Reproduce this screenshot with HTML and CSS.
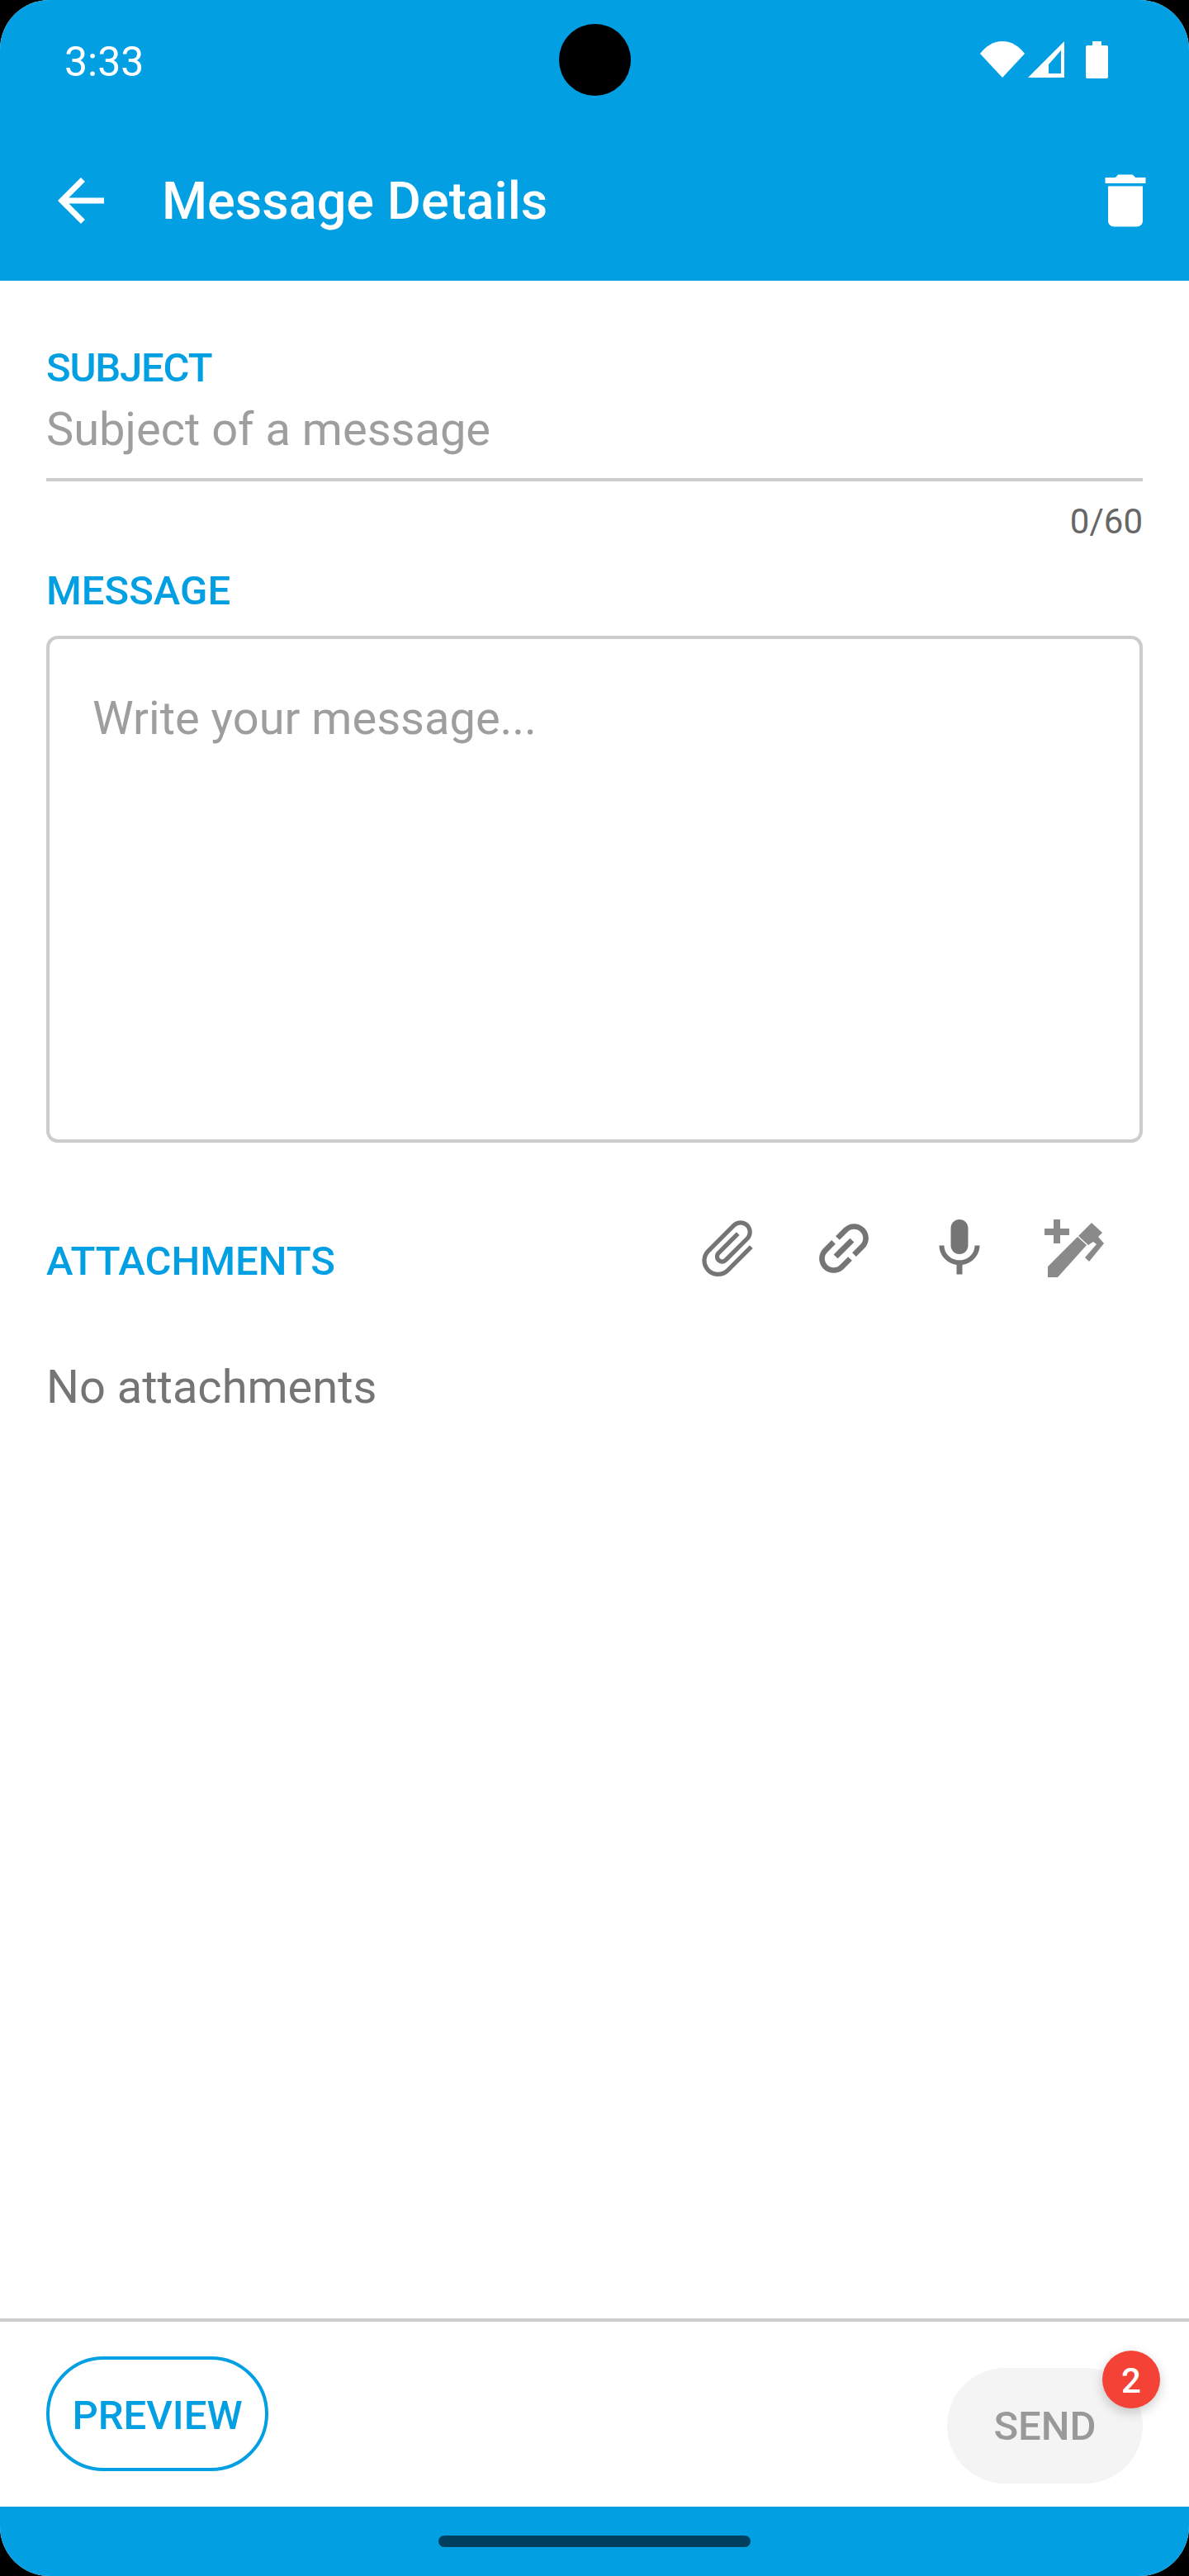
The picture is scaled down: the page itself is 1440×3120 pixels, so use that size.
FILE: index.html
```html
<!DOCTYPE html>
<html lang="en">
<head>
    <meta charset="UTF-8">
    <meta name="viewport" content="width=device-width, initial-scale=1.0">
    <title>Message Details</title>
    <link rel="stylesheet" href="styles.css">
</head>
<body>

    <div class="screen">
        <div class="camera"></div>

        <div class="status-bar">
            <span class="clock">3:33</span>
            <div class="status-icons">
                <svg class="status-wifi" viewBox="0 0 54 44"><path fill="#fff" d="M0 15C7 6 16 0 27 0s20 6 27 15L27 44z"/></svg>
                <svg class="status-signal" viewBox="0 0 44 44"><path fill="#fff" fill-rule="evenodd" d="M44 0v44H0zM40 11L25 28v11h15z"/></svg>
                <svg class="status-battery" viewBox="0 0 27 45"><path fill="#fff" d="M8 0h11v5h6q2 0 2 2v36q0 2-2 2H2q-2 0-2-2V7q0-2 2-2h6z"/></svg>
            </div>
        </div>

        <header class="toolbar">
            <svg class="icon" viewBox="0 0 24 24"><path fill="#fff" d="M20 11H7.83l5.59-5.59L12 4l-8 8 8 8 1.41-1.41L7.83 13H20v-2z"/></svg>
            <h1 class="toolbar-title">Message Details</h1>
            <svg class="icon" viewBox="0 0 24 24"><path fill="#fff" d="M6 19c0 1.1.9 2 2 2h8c1.1 0 2-.9 2-2V7H6v12zM19 4h-3.5l-1-1h-5l-1 1H5v2h14V4z"/></svg>
        </header>

        <main class="content">
            <div class="field-label subject-label">SUBJECT</div>
            <div class="subject-input">Subject of a message</div>
            <div class="counter">0/60</div>

            <div class="field-label message-label">MESSAGE</div>
            <div class="message-box">Write your message...</div>

            <div class="attachments-row">
                <div class="field-label attachments-label">ATTACHMENTS</div>
                <div class="attach-actions">
                    <svg class="icon" viewBox="0 0 24 24"><path class="grey" transform="rotate(45 12 12)" d="M16.5 6v11.5c0 2.21-1.79 4-4 4s-4-1.79-4-4V5c0-1.38 1.12-2.5 2.500-2.500s2.500 1.120 2.500 2.500v10.500c0 .55-.45 1-1 1s-1-.45-1-1V6H10v9.500c0 1.380 1.120 2.500 2.500 2.500s2.500-1.120 2.500-2.500V5c0-2.210-1.790-4-4-4S7 2.790 7 5v12.500c0 3.040 2.460 5.500 5.500 5.500s5.500-2.460 5.500-5.500V6h-1.500z"/></svg>
                    <svg class="icon" viewBox="0 0 24 24"><path class="grey" transform="rotate(-45 12 12)" d="M3.9 12c0-1.71 1.39-3.1 3.1-3.1h4V7H7c-2.76 0-5 2.24-5 5s2.24 5 5 5h4v-1.9H7c-1.71 0-3.1-1.39-3.1-3.1zM8 13h8v-2H8v2zm9-6h-4v1.9h4c1.71 0 3.1 1.39 3.1 3.1s-1.39 3.1-3.1 3.1h-4V17h4c2.76 0 5-2.24 5-5s-2.24-5-5-5z"/></svg>
                    <svg class="icon" viewBox="0 0 24 24"><path class="grey" d="M12 14c1.66 0 2.99-1.34 2.99-3L15 5c0-1.66-1.34-3-3-3S9 3.34 9 5v6c0 1.66 1.34 3 3 3zm5.3-3c0 3-2.54 5.1-5.3 5.1S6.7 14 6.7 11H5c0 3.41 2.72 6.23 6 6.72V21h2v-3.28c3.28-.48 6-3.3 6-6.72h-1.7z"/></svg>
                    <svg class="icon" viewBox="0 0 84 84"><path class="grey-light" d="M5 18h11V7h8v11h11v8H24v10h-8V26H5zM9 77V64l36-36 11 10-35 39zM46 27l16-16 13 12-5 5 7 8-18 22-5-5 14-16-4-3-6 4z"/></svg>
                </div>
            </div>

            <p class="no-attachments">No attachments</p>
        </main>

        <footer class="actions">
            <button class="btn-preview">PREVIEW</button>
            <div class="send-wrap">
                <button class="btn-send">SEND</button>
                <span class="badge">2</span>
            </div>
        </footer>

        <div class="nav-bar"><div class="nav-handle"></div></div>
    </div>

</body>
</html>
```

FILE: styles.css
```css
* {
    box-sizing: border-box;
}
body {
    margin: 0;
    background-color: #000;
    font-family: Roboto, 'Liberation Sans', sans-serif;
}
.screen {
    width: 1440px;
    height: 3120px;
    position: relative;
    display: flex;
    flex-direction: column;
    background-color: #fff;
    border-radius: 60px;
    overflow: hidden;
}
.camera {
    position: absolute;
    top: 29px;
    left: 677px;
    width: 87px;
    height: 87px;
    background-color: #000;
    border-radius: 50%;
}

/* --- status bar and toolbar --- */
.status-bar {
    height: 98px;
    flex-shrink: 0;
    display: flex;
    justify-content: space-between;
    padding: 0 98px 0 78px;
    background-color: #039fe3;
    align-items: flex-start;
}
.clock {
    margin-top: 47px;
    font-size: 50px;
    line-height: 56px;
    color: #fff;
}
.status-icons {
    display: flex;
    margin-top: 50px;
}
.status-wifi { width: 54px; height: 44px; }
.status-signal { width: 44px; height: 44px; margin-left: 4px; }
.status-battery { width: 27px; height: 45px; margin-left: 26px; }
.toolbar {
    height: 242px;
    flex-shrink: 0;
    display: flex;
    align-items: flex-start;
    padding: 103px 35px 0 56px;
    background-color: #039fe3;
}
.toolbar-title {
    flex: 1;
    margin: 0 0 0 56px;
    font-size: 63px;
    line-height: 86px;
    font-weight: 500;
    color: #fff;
}
.icon {
    width: 84px;
    height: 84px;
    flex-shrink: 0;
}
.grey { fill: #757575; }
.grey-light { fill: #8a8a8a; }

/* --- form --- */
.content {
    flex: 1;
    padding: 78px 56px 0;
}
.field-label {
    font-size: 49px;
    line-height: 56px;
    font-weight: 500;
    color: #039fe3;
}
.subject-label {
    letter-spacing: -1.2px;
}
.subject-input {
    margin-top: 14px;
    padding-bottom: 27px;
    border-bottom: 4px solid #ccc;
    font-size: 56px;
    line-height: 64px;
    color: #9e9e9e;
}
.counter {
    margin-top: 25px;
    text-align: right;
    font-size: 42px;
    line-height: 48px;
    color: #666;
}
.message-label {
    margin-top: 32px;
}
.message-box {
    height: 614px;
    margin-top: 26px;
    padding: 64px 52px;
    border: 4px solid #ccc;
    border-radius: 14px;
    font-size: 56px;
    line-height: 64px;
    color: #9e9e9e;
}
.attachments-row {
    display: flex;
    justify-content: space-between;
    align-items: flex-end;
    margin-top: 86px;
}
.attachments-label {
    margin-bottom: -2px;
}
.attach-actions {
    display: flex;
    gap: 56px;
    padding-right: 40px;
}
.no-attachments {
    margin: 94px 0 0;
    font-size: 56px;
    line-height: 64px;
    color: #757575;
}

/* --- bottom actions --- */
.actions {
    height: 228px;
    flex-shrink: 0;
    display: flex;
    justify-content: space-between;
    align-items: flex-start;
    padding: 42px 56px 0;
    border-top: 4px solid #ccc;
}
.btn-preview,
.btn-send {
    padding: 0;
    font-family: inherit;
    font-size: 49px;
    font-weight: 500;
    border-radius: 70px;
}
.btn-preview {
    width: 269px;
    height: 139px;
    padding-top: 3px;
    background: #fff;
    border: 4px solid #039fe3;
    color: #039fe3;
}
.btn-send {
    width: 237px;
    height: 140px;
    background: #f4f4f4;
    border: none;
    color: #999;
}
.send-wrap {
    position: relative;
    margin-top: 14px;
    height: 140px;
}
.badge {
    position: absolute;
    top: -21px;
    right: -21px;
    width: 70px;
    height: 70px;
    display: flex;
    justify-content: center;
    align-items: center;
    padding-top: 2px;
    background-color: #f44336;
    border-radius: 50%;
    box-shadow: 0 5px 14px rgba(0, 0, 0, 0.2);
    font-size: 42px;
    font-weight: 500;
    color: #fff;
}
.nav-bar {
    height: 84px;
    flex-shrink: 0;
    display: flex;
    justify-content: center;
    padding-top: 35px;
    background-color: #039fe3;
}
.nav-handle {
    width: 378px;
    height: 14px;
    background-color: #003f5e;
    border-radius: 7px;
}
```
